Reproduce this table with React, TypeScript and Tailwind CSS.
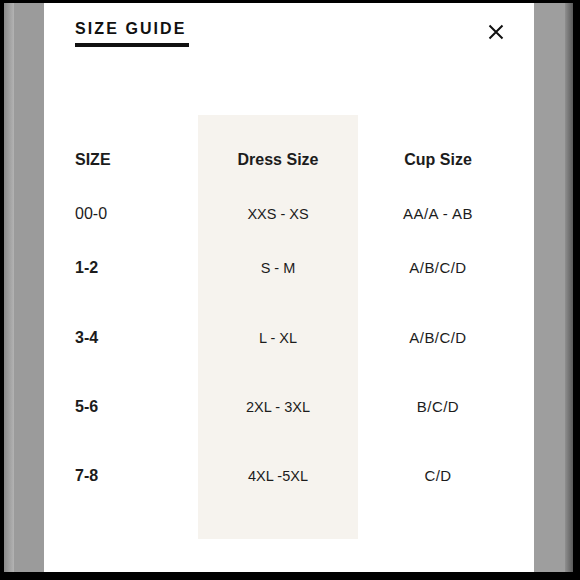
import React from "react";

const rows = [
  { size: "00-0", dress: "XXS - XS", cup: "AA/A - AB", bold: false, gap: "mt-[34px]" },
  { size: "1-2", dress: "S - M", cup: "A/B/C/D", bold: true, gap: "mt-[34px]" },
  { size: "3-4", dress: "L - XL", cup: "A/B/C/D", bold: true, gap: "mt-[50px]" },
  { size: "5-6", dress: "2XL - 3XL", cup: "B/C/D", bold: true, gap: "mt-[49px]" },
  { size: "7-8", dress: "4XL -5XL", cup: "C/D", bold: true, gap: "mt-[49px]" },
];

function CloseIcon() {
  return (
    <svg width="16" height="16" viewBox="0 0 16 16" fill="none">
      <path d="M1.5 1.5 L14.5 14.5 M14.5 1.5 L1.5 14.5" stroke="#111" strokeWidth="2" />
    </svg>
  );
}

export default function App() {
  return (
    <div
      className="w-[580px] h-[580px] bg-black flex pt-[3px] pb-[8px] pl-[4px] pr-[7px]"
      style={{ fontFamily: '"Liberation Sans", Arial, sans-serif' }}
    >
      <div className="w-[40px] flex">
        <div className="w-[10px] bg-gradient-to-r from-[#8a8a8a] to-[#b3b3b3]" />
        <div className="flex-1 bg-[#9b9b9b]" />
      </div>

      <div className="flex-1 bg-white flex flex-col text-[#1c1c1c]">
        <div className="flex justify-between items-start pt-[16px] pl-[31px] pr-[30px]">
          <div className="pb-[4px] border-b-[4px] border-[#111] w-[114px]">
            <div className="text-[16px] leading-[20px] font-bold tracking-[0.13em] text-[#111] whitespace-nowrap">
              SIZE GUIDE
            </div>
          </div>
          <div className="mt-[5px]">
            <CloseIcon />
          </div>
        </div>

        <div className="flex mt-[68px] pl-[31px]">
          <div className="w-[123px] pt-[35px] flex flex-col">
            <div className="h-[20px] leading-[20px] text-[16px] font-bold">SIZE</div>
            {rows.map((r) => (
              <div
                key={r.size}
                className={`${r.gap} h-[20px] leading-[20px] text-[16px] ${r.bold ? "font-bold" : "font-normal"}`}
              >
                {r.size}
              </div>
            ))}
          </div>

          <div className="w-[160px] h-[424px] bg-[#f6f3ee] pt-[35px] flex flex-col items-center">
            <div className="h-[20px] leading-[20px] text-[16px] font-bold">Dress Size</div>
            {rows.map((r) => (
              <div key={r.dress} className={`${r.gap} h-[20px] leading-[20px] text-[14.5px]`}>
                {r.dress}
              </div>
            ))}
          </div>

          <div className="w-[160px] pt-[35px] flex flex-col items-center">
            <div className="h-[20px] leading-[20px] text-[16px] font-bold">Cup Size</div>
            {rows.map((r) => (
              <div key={r.size + r.cup} className={`${r.gap} h-[20px] leading-[20px] text-[15px] tracking-[0.03em]`}>
                {r.cup}
              </div>
            ))}
          </div>
        </div>
      </div>

      <div className="w-[39px] flex">
        <div className="flex-1 bg-[#9e9e9e]" />
        <div className="w-[8px] bg-gradient-to-r from-[#8f8f8f] to-[#5a5a5a]" />
      </div>
    </div>
  );
}
